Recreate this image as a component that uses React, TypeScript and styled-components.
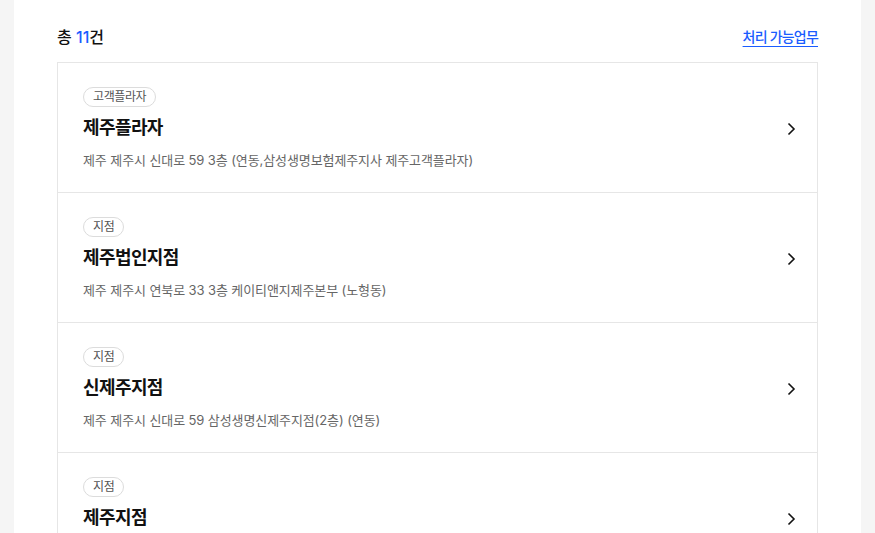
import styled, { createGlobalStyle } from "styled-components";

const GlobalStyle = createGlobalStyle`
  body {
    margin: 0;
    background: #f5f5f5;
    font-family: Inter, "Noto Sans CJK KR", sans-serif;
    color: #111;
  }
`;

const Page = styled.div`
  padding: 0 14px;
`;

const Panel = styled.main`
  background: #fff;
  min-height: 533px;
  padding: 0 43px;
`;

const Header = styled.div`
  display: flex;
  align-items: center;
  justify-content: space-between;
  padding: 24px 0 14px;
  height: 24px;
`;

const Total = styled.h2`
  margin: 0;
  font-size: 16px;
  font-weight: 500;
  letter-spacing: 0;
`;

const Count = styled.span`
  color: #1a5cff;
`;

const TaskLink = styled.a`
  font-size: 14px;
  font-weight: 500;
  color: #1a5cff;
  letter-spacing: -0.8px;
  text-decoration: underline;
  text-underline-offset: 4px;
  cursor: pointer;
`;

const List = styled.ul`
  list-style: none;
  margin: 0;
  padding: 0;
  border: 1px solid #e6e6e6;
`;

const Row = styled.li`
  display: flex;
  align-items: center;
  padding: 24px 20px 22px 25px;
  & + & {
    border-top: 1px solid #e6e6e6;
  }
`;

const Info = styled.div`
  flex: 1;
  display: flex;
  flex-direction: column;
  align-items: flex-start;
`;

const Badge = styled.span`
  height: 18px;
  line-height: 18px;
  padding: 0 9px;
  border: 1px solid #dcdcdc;
  border-radius: 10px;
  font-size: 12px;
  color: #555;
  letter-spacing: -0.4px;
`;

const Title = styled.strong`
  margin-top: 8px;
  font-size: 18px;
  line-height: 26px;
  font-weight: 700;
  letter-spacing: -0.6px;
`;

const Address = styled.p`
  margin: 9px 0 0;
  font-size: 13px;
  line-height: 20px;
  color: #666;
  letter-spacing: -0.1px;
`;

const Chevron = () => (
  <svg width="12" height="14" viewBox="0 0 12 14" fill="none">
    <path d="M3.5 1.5 L9 7 L3.5 12.5" stroke="#111" strokeWidth="1.6" />
  </svg>
);

const offices = [
  {
    type: "고객플라자",
    name: "제주플라자",
    address: "제주 제주시 신대로 59 3층 (연동,삼성생명보험제주지사 제주고객플라자)",
  },
  {
    type: "지점",
    name: "제주법인지점",
    address: "제주 제주시 연북로 33 3층 케이티앤지제주본부 (노형동)",
  },
  {
    type: "지점",
    name: "신제주지점",
    address: "제주 제주시 신대로 59 삼성생명신제주지점(2층) (연동)",
  },
  {
    type: "지점",
    name: "제주지점",
    address: "제주 제주시 중앙로 217 삼성생명빌딩 3층 (이도이동)",
  },
];

const App = () => {
  return (
    <Page>
      <GlobalStyle />
      <Panel>
        <Header>
          <Total>
            총 <Count>11</Count>건
          </Total>
          <TaskLink>처리 가능업무</TaskLink>
        </Header>
        <List>
          {offices.map((o) => (
            <Row key={o.name}>
              <Info>
                <Badge>{o.type}</Badge>
                <Title>{o.name}</Title>
                <Address>{o.address}</Address>
              </Info>
              <Chevron />
            </Row>
          ))}
        </List>
      </Panel>
    </Page>
  );
};

export default App;
